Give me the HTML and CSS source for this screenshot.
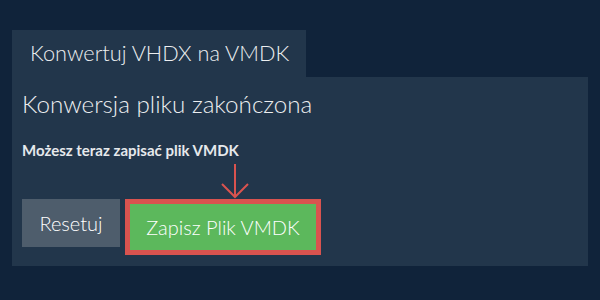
FILE: index.html
```html
<!DOCTYPE html>
<html lang="pl">
<head>
<meta charset="utf-8">
<link rel="stylesheet" href="styles.css">
</head>
<body>
<div class="wrap">
  <div class="tab">Konwertuj VHDX na VMDK</div>
  <div class="panel">
    <h1 class="title">Konwersja pliku zakończona</h1>
    <p class="msg">Możesz teraz zapisać plik VMDK</p>
    <div class="arrow-row">
      <svg class="arrow" width="30" height="36" viewBox="0 0 30 36">
        <path d="M15 1 V34 M2 21 L15 34 L28 21" fill="none" stroke="#d9534f" stroke-width="2"/>
      </svg>
    </div>
    <div class="actions">
      <button class="btn reset">Resetuj</button>
      <div class="highlight"><button class="btn save">Zapisz Plik VMDK</button></div>
    </div>
  </div>
</div>
</body>
</html>
```
FILE: styles.css
```css
html, body {
  margin: 0;
  padding: 0;
  background: #10233a;
  font-family: Lato, "Open Sans", sans-serif;
  width: 600px;
  height: 300px;
  overflow: hidden;
}
.wrap {
  padding: 30px 12px 0 12px;
}
.tab {
  box-sizing: border-box;
  width: 294px;
  height: 47px;
  background: #22364b;
  color: #eceef0;
  font-size: 21.7px;
  font-weight: 300;
  padding-left: 18px;
  line-height: 46px;
}
.panel {
  box-sizing: border-box;
  height: 189px;
  background: #22364b;
  padding: 11px 10px 0 10px;
}
.title {
  margin: 0;
  font-weight: 300;
  font-size: 24.2px;
  line-height: 32px;
  color: #eceef0;
}
.msg {
  margin: 20px 0 0 0;
  font-size: 15px;
  font-weight: 700;
  line-height: 20px;
  color: #e6e9ec;
}
.arrow-row {
  height: 36px;
  margin-top: 3px;
  padding-left: 198px;
}
.arrow {
  display: block;
}
.actions {
  display: flex;
  align-items: flex-start;
  gap: 5px;
}
.btn {
  border: 0;
  font-family: Lato, "Open Sans", sans-serif;
  font-size: 20px;
  font-weight: 300;
  color: #ffffff;
  padding: 0;
  margin: 0;
}
.reset {
  width: 98px;
  height: 48px;
  background: #4e5d6c;
}
.highlight {
  border: 5px solid #d9534f;
}
.save {
  display: block;
  width: 186px;
  height: 46px;
  background: #5cb85c;
}
```
